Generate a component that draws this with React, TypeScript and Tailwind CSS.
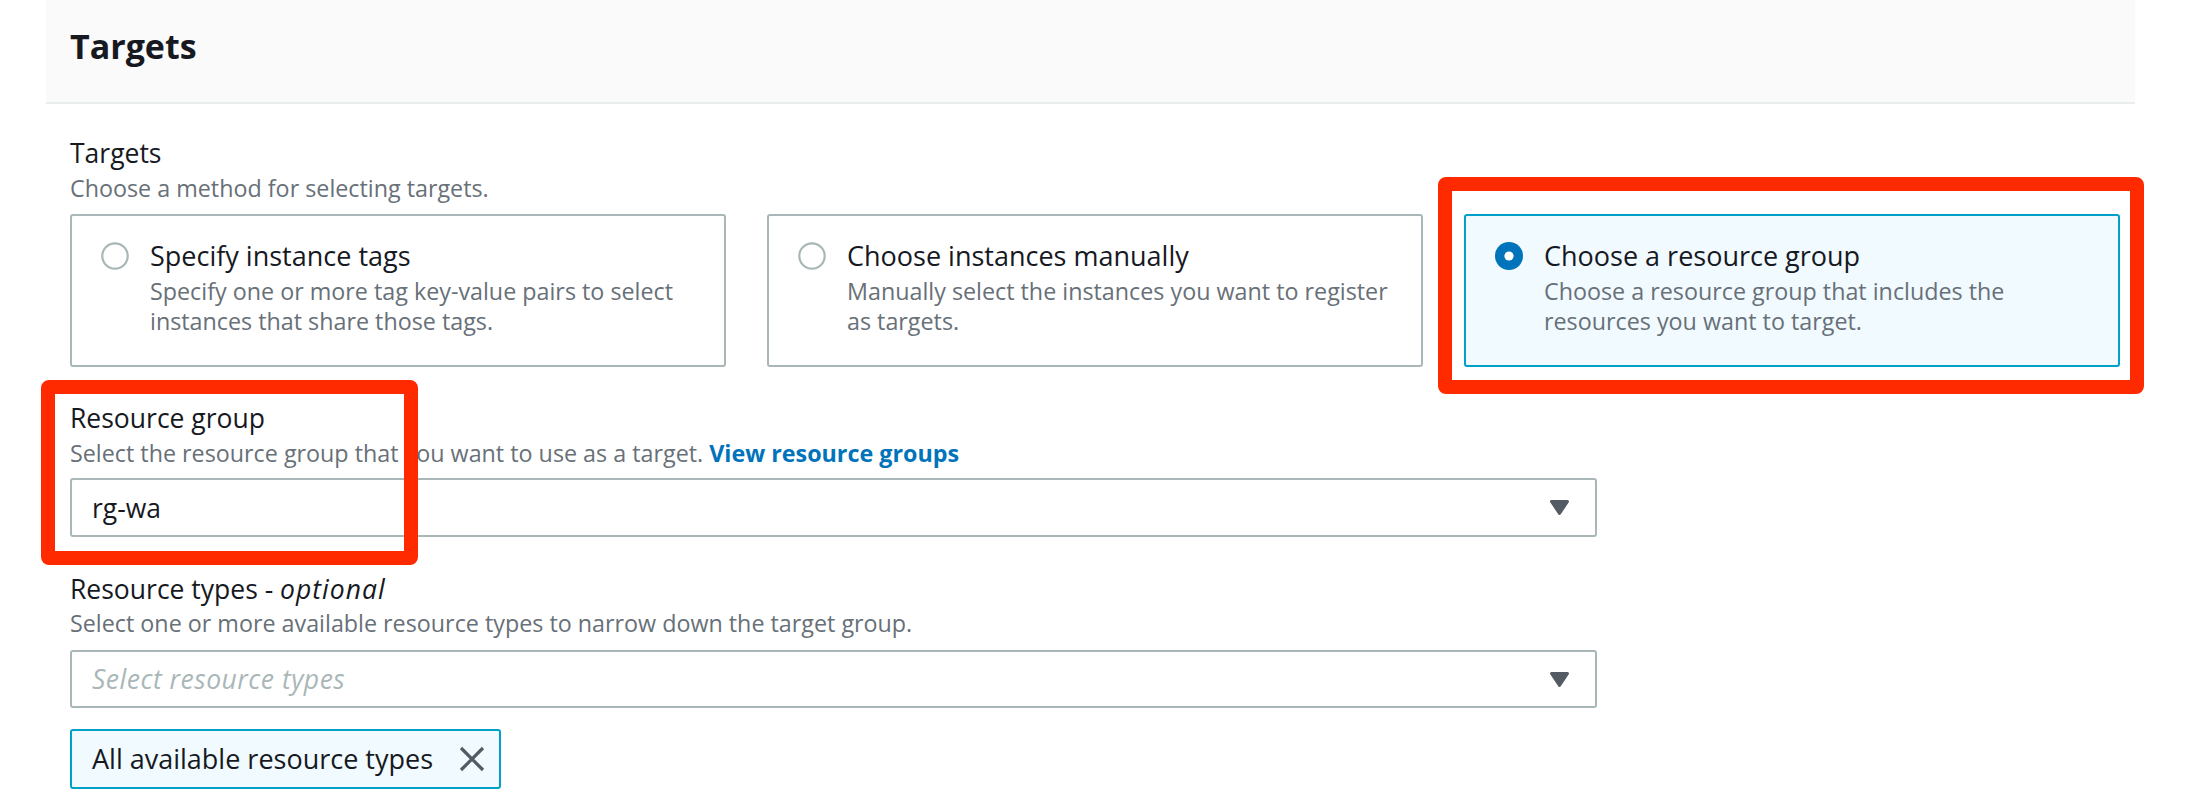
import React from "react";

function Radio({ checked }: { checked?: boolean }) {
  if (checked) {
    return (
      <svg width="28" height="28" viewBox="0 0 28 28" className="shrink-0">
        <circle cx="14" cy="14" r="14" fill="#0073bb" />
        <circle cx="14" cy="14" r="4.6" fill="#ffffff" />
      </svg>
    );
  }
  return (
    <svg width="28" height="28" viewBox="0 0 28 28" className="shrink-0">
      <circle cx="14" cy="14" r="12.7" fill="#ffffff" stroke="#aab7b8" strokeWidth="2.2" />
    </svg>
  );
}

function Caret() {
  return (
    <svg width="21" height="17" viewBox="0 0 21 17" className="shrink-0">
      <path d="M2.5 2.5 L18.5 2.5 L10.5 14.5 Z" fill="#545b64" stroke="#545b64" strokeWidth="3" strokeLinejoin="round" />
    </svg>
  );
}

function Card({
  title,
  desc,
  checked,
}: {
  title: string;
  desc: string;
  checked?: boolean;
}) {
  return (
    <div
      className={
        checked
          ? "h-[153px] rounded-[3px] border-2 border-[#00a1c9] bg-[#f1faff] pl-[29px] pr-[24px] pt-[24px] flex items-start"
          : "h-[153px] rounded-[3px] border-2 border-[#aab7b8] bg-white pl-[29px] pr-[24px] pt-[24px] flex items-start"
      }
    >
      <div className="h-[32px] flex items-center">
        <Radio checked={checked} />
      </div>
      <div className="ml-[21px] flex-1">
        <div className="text-[27px] leading-[32px] text-[#16191f]">{title}</div>
        <div className="mt-[4px] text-[23.3px] leading-[30px] text-[#687078]">{desc}</div>
      </div>
    </div>
  );
}

export default function App() {
  return (
    <div className="relative w-[2186px] h-[808px] overflow-hidden bg-white font-['Open_Sans','Liberation_Sans',sans-serif]">
      <div className="ml-[46px] w-[2089px]">
        <div className="h-[102px] bg-[#fafafa] pt-[26px] px-[24px]">
          <h2 className="text-[34px] leading-[40px] font-bold text-[#16191f]">Targets</h2>
        </div>
        <div className="h-[2px] bg-[#eaeded]" />

        <div className="pl-[24px] pr-[15px] pt-[31px]">
          <div className="text-[26.5px] leading-[36px] text-[#16191f]">Targets</div>
          <div className="text-[23.3px] leading-[34px] text-[#687078]">
            Choose a method for selecting targets.
          </div>
          <div className="mt-[9px] grid grid-cols-3 gap-[41px]">
            <Card
              title="Specify instance tags"
              desc="Specify one or more tag key-value pairs to select instances that share those tags."
            />
            <Card
              title="Choose instances manually"
              desc="Manually select the instances you want to register as targets."
            />
            <Card
              checked
              title="Choose a resource group"
              desc="Choose a resource group that includes the resources you want to target."
            />
          </div>

          <div className="mt-[33px] text-[26.5px] leading-[36px] text-[#16191f]">Resource group</div>
          <div className="text-[23.3px] leading-[34px] text-[#687078]">
            Select the resource group that you want to use as a target.{" "}
            <span className="font-bold text-[#0073bb]">View resource groups</span>
          </div>
          <div className="mt-[8px] w-[1527px] h-[59px] rounded-[3px] border-2 border-[#aab7b8] bg-white pl-[20px] pr-[25px] flex items-center justify-between">
            <span className="text-[26.5px] leading-[32px] text-[#16191f]">rg-wa</span>
            <Caret />
          </div>

          <div className="mt-[35px] text-[26.5px] leading-[34px] text-[#16191f]">
            Resource types - <span className="italic tracking-[1px]">optional</span>
          </div>
          <div className="text-[23.3px] leading-[34px] text-[#687078]">
            Select one or more available resource types to narrow down the target group.
          </div>
          <div className="mt-[10px] w-[1527px] h-[58px] rounded-[3px] border-2 border-[#aab7b8] bg-white pl-[20px] pr-[25px] flex items-center justify-between">
            <span className="text-[26.5px] leading-[32px] italic tracking-[0.5px] text-[#aab7b8]">Select resource types</span>
            <Caret />
          </div>

          <div className="mt-[21px] inline-flex h-[60px] items-center rounded-[3px] border-2 border-[#00a1c9] bg-[#f1faff] pl-[20px] pr-[14px]">
            <span className="text-[27px] leading-[32px] text-[#16191f]">All available resource types</span>
            <svg width="26" height="26" viewBox="0 0 26 26" className="ml-[26px] shrink-0">
              <path d="M2 2 L24 24 M24 2 L2 24" stroke="#545b64" strokeWidth="3.2" strokeLinecap="butt" />
            </svg>
          </div>
        </div>
      </div>

      <div className="absolute left-[1438px] top-[177px] w-[706px] h-[217px] rounded-[8px] border-[14px] border-[#ff2a00]" />
      <div className="absolute left-[41px] top-[380px] w-[377px] h-[185px] rounded-[8px] border-[14px] border-[#ff2a00]" />
    </div>
  );
}
